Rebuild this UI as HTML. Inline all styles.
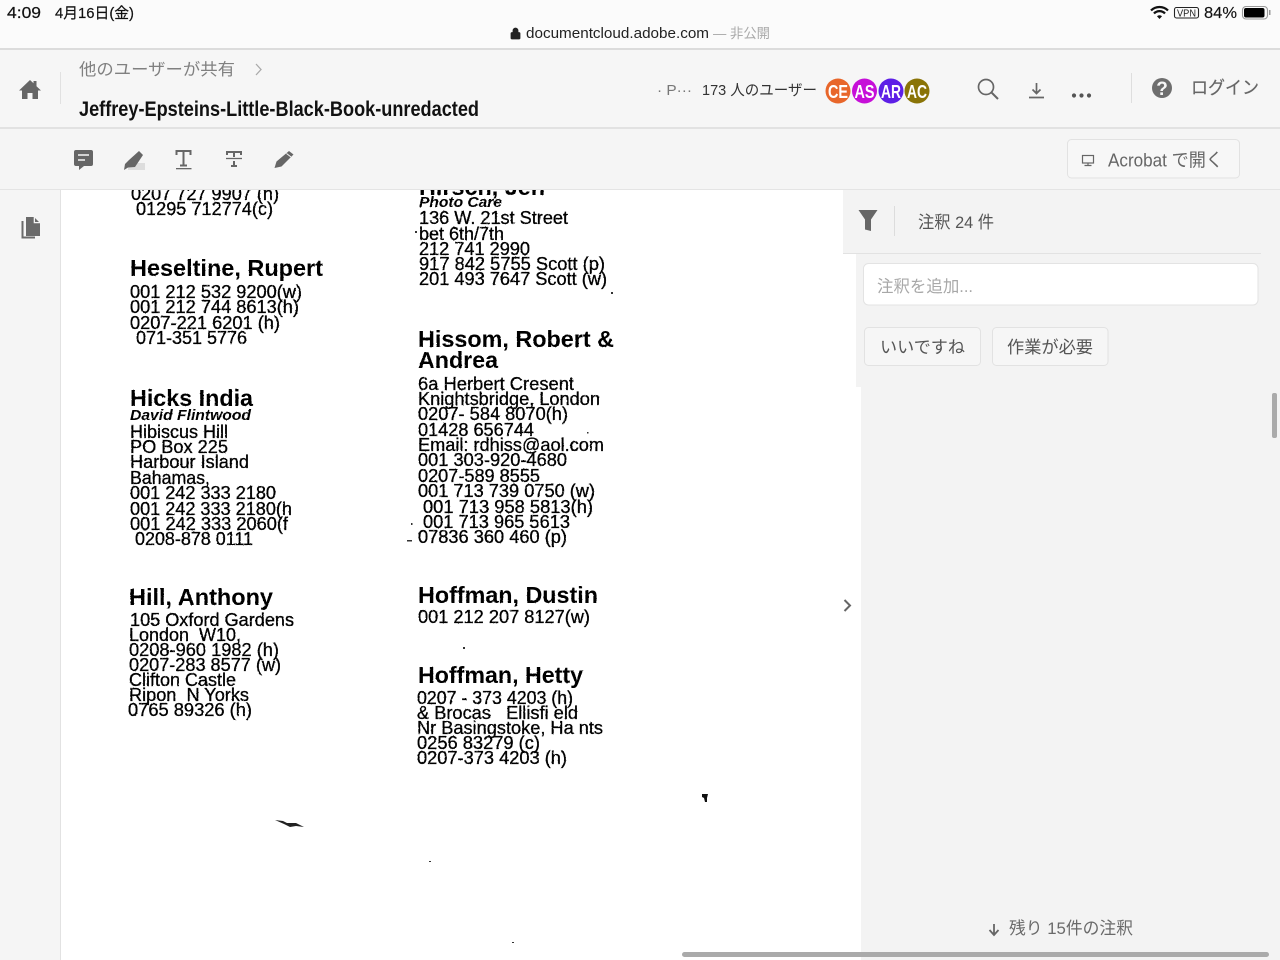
<!DOCTYPE html>
<html lang="ja">
<head>
<meta charset="utf-8">
<title>Jeffrey-Epsteins-Little-Black-Book-unredacted</title>
<style>
html,body{margin:0;padding:0;width:1280px;height:960px;overflow:hidden;background:#fff}
svg{display:block}
text{font-family:"Liberation Sans","Noto Sans CJK JP",sans-serif;white-space:pre}
.d{font-size:18px;fill:#000;stroke:#000;stroke-width:.3}
.h{font-size:23px;font-weight:bold;fill:#000}
.i{font-size:14.500px;font-weight:bold;font-style:italic;fill:#000}
</style>
</head>
<body>
<svg width="1280" height="960" viewBox="0 0 1280 960" xmlns="http://www.w3.org/2000/svg">
<defs>
<filter id="scan" filterUnits="userSpaceOnUse" x="61" y="190" width="782" height="770">
<feTurbulence type="fractalNoise" baseFrequency="0.6" numOctaves="1" seed="4" result="n"/>
<feDisplacementMap in="SourceGraphic" in2="n" scale="1.300" xChannelSelector="R" yChannelSelector="G"/>
</filter>
</defs>
<!-- backgrounds -->
<rect width="1280" height="960" fill="#fff"/>
<rect width="1280" height="49" fill="#fbfbfb"/>
<rect y="48" width="1280" height="2" fill="#dcdcdc"/>
<rect y="50" width="1280" height="78" fill="#f6f6f6"/>
<rect y="127" width="1280" height="2" fill="#e2e2e2"/>
<rect y="129" width="1280" height="60" fill="#f5f5f5"/>
<rect y="189" width="1280" height="1" fill="#e4e4e4"/>
<rect y="190" width="60" height="770" fill="#f5f5f5"/>
<rect x="60" y="190" width="1" height="770" fill="#e2e2e2"/>
<rect x="843" y="190" width="437" height="63" fill="#f3f3f3"/>
<rect x="856" y="253" width="424" height="134" fill="#f3f3f3"/>
<rect x="861" y="387" width="419" height="573" fill="#f3f3f3"/>
<rect x="843" y="253" width="418" height="1" fill="#e2e2e2"/>

<!-- status bar -->
<text x="7" y="18" font-size="15.500" fill="#111" stroke="#111" stroke-width=".2" textLength="34" lengthAdjust="spacingAndGlyphs">4:09</text>
<text x="55" y="18" font-size="15" fill="#111" stroke="#111" stroke-width=".2" textLength="79" lengthAdjust="spacingAndGlyphs">4月16日(金)</text>
<path d="M512 32.500h7a1 1 0 0 1 1 1v4.500a1 1 0 0 1-1 1h-7a1 1 0 0 1-1-1v-4.500a1 1 0 0 1 1-1zM513 32.500v-2a2.500 2.500 0 0 1 5 0v2" fill="#222" stroke="#222" stroke-width=".8"/>
<text x="526" y="38" font-size="15" fill="#222" textLength="183" lengthAdjust="spacingAndGlyphs">documentcloud.adobe.com</text>
<text x="713" y="38" font-size="13.500" fill="#aaa" textLength="57" lengthAdjust="spacingAndGlyphs">— 非公開</text>
<path d="M1151 10.500a12 12 0 0 1 17 0M1154 13.500a7.500 7.500 0 0 1 11 0" fill="none" stroke="#111" stroke-width="2.300"/>
<path d="M1157 16.300a3.500 3.500 0 0 1 5 0l-2.500 2.700z" fill="#111"/>
<rect x="1174.500" y="7.500" width="24" height="10.500" rx="2" fill="none" stroke="#222" stroke-width="1.100"/>
<text x="1177" y="16.500" font-size="10.500" fill="#222" textLength="19" lengthAdjust="spacingAndGlyphs">VPN</text>
<text x="1204" y="18" font-size="16" fill="#111" stroke="#111" stroke-width=".15" textLength="33" lengthAdjust="spacingAndGlyphs">84%</text>
<rect x="1242.500" y="6.500" width="25" height="12.500" rx="3.500" fill="none" stroke="#999" stroke-width="1.100"/>
<rect x="1244" y="8" width="20.500" height="9.500" rx="2" fill="#000"/>
<rect x="1269" y="10" width="1.500" height="5" fill="#999"/>

<!-- header -->
<path d="M19 90.500 30 80l3.500 3.300V81h3v5.200l4.500 4.300h-3V99h-5.500v-6h-5v6H22v-8.500z" fill="#666"/>
<rect x="60" y="72" width="1" height="32" fill="#e1e1e1"/>
<text x="79" y="75" font-size="16.500" fill="#808080" textLength="156" lengthAdjust="spacingAndGlyphs">他のユーザーが共有</text>
<path d="M256 64l5 5.500-5 5.500" fill="none" stroke="#aaa" stroke-width="1.300"/>
<text x="79" y="116" font-size="21" font-weight="bold" fill="#111" textLength="400" lengthAdjust="spacingAndGlyphs">Jeffrey-Epsteins-Little-Black-Book-unredacted</text>
<text x="657" y="95" font-size="15" fill="#777" textLength="35" lengthAdjust="spacingAndGlyphs">· P···</text>
<text x="702" y="95" font-size="15" fill="#333" textLength="115" lengthAdjust="spacingAndGlyphs">173 人のユーザー</text>
<circle cx="838" cy="91" r="12.500" fill="#e8662a"/>
<circle cx="864.500" cy="91" r="12.500" fill="#c60fd8"/>
<circle cx="891" cy="91" r="12.500" fill="#5d1fe6"/>
<circle cx="917" cy="91" r="12.500" fill="#8a7407"/>
<g font-size="18" font-weight="bold" fill="#fff">
<text x="828" y="98" textLength="20" lengthAdjust="spacingAndGlyphs">CE</text>
<text x="854.500" y="98" textLength="20" lengthAdjust="spacingAndGlyphs">AS</text>
<text x="881" y="98" textLength="20" lengthAdjust="spacingAndGlyphs">AR</text>
<text x="907" y="98" textLength="20" lengthAdjust="spacingAndGlyphs">AC</text>
</g>
<circle cx="986" cy="87" r="7.500" fill="none" stroke="#666" stroke-width="1.700"/>
<path d="M991.500 92.500 998 99" stroke="#666" stroke-width="2" fill="none"/>
<path d="M1036.500 83v10M1032.500 89.500l4 4 4-4M1029 97.500h15" fill="none" stroke="#666" stroke-width="1.700"/>
<g fill="#555"><circle cx="1074" cy="95.500" r="2.100"/><circle cx="1081.500" cy="95.500" r="2.100"/><circle cx="1089" cy="95.500" r="2.100"/></g>
<rect x="1131" y="73" width="1" height="30" fill="#dedede"/>
<circle cx="1162" cy="88" r="10" fill="#6e6e6e"/>
<text x="1162" y="95" font-size="19" font-weight="bold" fill="#f6f6f6" text-anchor="middle">?</text>
<text x="1191" y="94" font-size="18" fill="#666" stroke="#666" stroke-width=".2" textLength="68" lengthAdjust="spacingAndGlyphs">ログイン</text>

<!-- toolbar -->
<path d="M76 150h15a2 2 0 0 1 2 2v12a2 2 0 0 1-2 2H84l-5 4v-4h-3a2 2 0 0 1-2-2v-12a2 2 0 0 1 2-2z" fill="#666"/>
<path d="M78 155h11M78 160h7" stroke="#f5f5f5" stroke-width="1.500"/>
<rect x="128" y="163" width="17" height="7" fill="#ddd"/>
<path d="M139 151l4 4-8 12-7 .5-4 2.500 1-6 4-4z" fill="#666"/>
<path d="M176.500 155v-4h14v4M183.500 151v15M180 165.500h7" fill="none" stroke="#666" stroke-width="2"/>
<rect x="176" y="168" width="15.500" height="1.300" fill="#666"/>
<path d="M227 155v-3h14v3M234 152v5M234 161v4" fill="none" stroke="#666" stroke-width="2"/>
<path d="M226 158.500h16" stroke="#666" stroke-width="1.300"/>
<rect x="231" y="165" width="6" height="2" fill="#666"/>
<path d="M289 151l4.500 3.500-12 12-7 1.500 2-6.500z" fill="#666"/>
<path d="M286.500 153.500l4.500 3.500" stroke="#f5f5f5" stroke-width="1"/>
<rect x="1067.500" y="139.500" width="172" height="38.500" rx="4" fill="#f7f7f7" stroke="#e2e2e2"/>
<rect x="1082.500" y="155.500" width="11" height="7.500" fill="none" stroke="#666" stroke-width="1.200"/>
<path d="M1088 163v2M1084.500 165.500h7" stroke="#666" stroke-width="1.200"/>
<text x="1108" y="166.500" font-size="18.500" fill="#666" textLength="115" lengthAdjust="spacingAndGlyphs">Acrobat で開く</text>

<!-- left rail icon -->
<path d="M26 217h8l6 6v13H26z" fill="#6a6a6a"/>
<path d="M34 217v6h6z" fill="#f5f5f5" stroke="#f5f5f5" stroke-width=".6"/>
<path d="M35 218l4 4h-4z" fill="#6a6a6a"/>
<path d="M22.500 221v16.500H35" fill="none" stroke="#6a6a6a" stroke-width="2"/>

<!-- document -->
<svg x="61" y="190" width="782" height="770" viewBox="61 190 782 770" overflow="hidden">
<g filter="url(#scan)">
<text class="d" x="131" y="200" textLength="148" lengthAdjust="spacingAndGlyphs">0207 727 9907 (h)</text>
<text class="d" x="136" y="215" textLength="137" lengthAdjust="spacingAndGlyphs">01295 712774(c)</text>
<text class="h" x="130" y="276" textLength="193" lengthAdjust="spacingAndGlyphs">Heseltine, Rupert</text>
<text class="d" x="130" y="298" textLength="172" lengthAdjust="spacingAndGlyphs">001 212 532 9200(w)</text>
<text class="d" x="130" y="313" textLength="169" lengthAdjust="spacingAndGlyphs">001 212 744 8613(h)</text>
<text class="d" x="130" y="329" textLength="150" lengthAdjust="spacingAndGlyphs">0207-221 6201 (h)</text>
<text class="d" x="136" y="344" textLength="111" lengthAdjust="spacingAndGlyphs">071-351 5776</text>
<text class="h" x="130" y="406" textLength="123" lengthAdjust="spacingAndGlyphs">Hicks India</text>
<text class="i" x="130" y="420" textLength="121" lengthAdjust="spacingAndGlyphs">David Flintwood</text>
<text class="d" x="130" y="438" textLength="98" lengthAdjust="spacingAndGlyphs">Hibiscus Hill</text>
<text class="d" x="130" y="453" textLength="98" lengthAdjust="spacingAndGlyphs">PO Box 225</text>
<text class="d" x="130" y="468" textLength="119" lengthAdjust="spacingAndGlyphs">Harbour Island</text>
<text class="d" x="130" y="484" textLength="80" lengthAdjust="spacingAndGlyphs">Bahamas,</text>
<text class="d" x="130" y="499" textLength="146" lengthAdjust="spacingAndGlyphs">001 242 333 2180</text>
<text class="d" x="130" y="515" textLength="162" lengthAdjust="spacingAndGlyphs">001 242 333 2180(h</text>
<text class="d" x="130" y="530" textLength="158" lengthAdjust="spacingAndGlyphs">001 242 333 2060(f</text>
<text class="d" x="135" y="545" textLength="118" lengthAdjust="spacingAndGlyphs">0208-878 0111</text>
<text class="h" x="129" y="605" textLength="144" lengthAdjust="spacingAndGlyphs">Hill, Anthony</text>
<text class="d" x="130" y="626" textLength="164" lengthAdjust="spacingAndGlyphs">105 Oxford Gardens</text>
<text class="d" x="129" y="641" textLength="112" lengthAdjust="spacingAndGlyphs">London  W10,</text>
<text class="d" x="129" y="656" textLength="150" lengthAdjust="spacingAndGlyphs">0208-960 1982 (h)</text>
<text class="d" x="129" y="671" textLength="152" lengthAdjust="spacingAndGlyphs">0207-283 8577 (w)</text>
<text class="d" x="129" y="686" textLength="107" lengthAdjust="spacingAndGlyphs">Clifton Castle</text>
<text class="d" x="129" y="701" textLength="120" lengthAdjust="spacingAndGlyphs">Ripon  N Yorks</text>
<text class="d" x="128" y="716" textLength="124" lengthAdjust="spacingAndGlyphs">0765 89326 (h)</text>

<text class="h" x="419" y="195" textLength="126" lengthAdjust="spacingAndGlyphs">Hirsch, Jen</text>
<text class="i" x="419" y="207" textLength="83" lengthAdjust="spacingAndGlyphs">Photo Care</text>
<text class="d" x="419" y="224" textLength="149" lengthAdjust="spacingAndGlyphs">136 W. 21st Street</text>
<text class="d" x="419" y="240" textLength="85" lengthAdjust="spacingAndGlyphs">bet 6th/7th</text>
<text class="d" x="419" y="255" textLength="111" lengthAdjust="spacingAndGlyphs">212 741 2990</text>
<text class="d" x="419" y="270" textLength="186" lengthAdjust="spacingAndGlyphs">917 842 5755 Scott (p)</text>
<text class="d" x="419" y="285" textLength="188" lengthAdjust="spacingAndGlyphs">201 493 7647 Scott (w)</text>
<text class="h" x="418" y="347" textLength="196" lengthAdjust="spacingAndGlyphs">Hissom, Robert &amp;</text>
<text class="h" x="418" y="368" textLength="80" lengthAdjust="spacingAndGlyphs">Andrea</text>
<text class="d" x="418" y="390" textLength="156" lengthAdjust="spacingAndGlyphs">6a Herbert Cresent</text>
<text class="d" x="418" y="405" textLength="182" lengthAdjust="spacingAndGlyphs">Knightsbridge, London</text>
<text class="d" x="418" y="420" textLength="150" lengthAdjust="spacingAndGlyphs">0207- 584 8070(h)</text>
<text class="d" x="418" y="436" textLength="116" lengthAdjust="spacingAndGlyphs">01428 656744</text>
<text class="d" x="418" y="451" textLength="186" lengthAdjust="spacingAndGlyphs">Email: rdhiss@aol.com</text>
<text class="d" x="418" y="466" textLength="149" lengthAdjust="spacingAndGlyphs">001 303-920-4680</text>
<text class="d" x="418" y="482" textLength="122" lengthAdjust="spacingAndGlyphs">0207-589 8555</text>
<text class="d" x="418" y="497" textLength="177" lengthAdjust="spacingAndGlyphs">001 713 739 0750 (w)</text>
<text class="d" x="423" y="513" textLength="170" lengthAdjust="spacingAndGlyphs">001 713 958 5813(h)</text>
<text class="d" x="423" y="528" textLength="147" lengthAdjust="spacingAndGlyphs">001 713 965 5613</text>
<text class="d" x="418" y="543" textLength="149" lengthAdjust="spacingAndGlyphs">07836 360 460 (p)</text>
<text class="h" x="418" y="603" textLength="180" lengthAdjust="spacingAndGlyphs">Hoffman, Dustin</text>
<text class="d" x="418" y="623" textLength="172" lengthAdjust="spacingAndGlyphs">001 212 207 8127(w)</text>
<text class="h" x="418" y="683" textLength="165" lengthAdjust="spacingAndGlyphs">Hoffman, Hetty</text>
<text class="d" x="417" y="704" textLength="156" lengthAdjust="spacingAndGlyphs">0207 - 373 4203 (h)</text>
<text class="d" x="417" y="719" textLength="161" lengthAdjust="spacingAndGlyphs">&amp; Brocas   Ellisfi eld</text>
<text class="d" x="417" y="734" textLength="186" lengthAdjust="spacingAndGlyphs">Nr Basingstoke, Ha nts</text>
<text class="d" x="417" y="749" textLength="123" lengthAdjust="spacingAndGlyphs">0256 83279 (c)</text>
<text class="d" x="417" y="764" textLength="150" lengthAdjust="spacingAndGlyphs">0207-373 4203 (h)</text>
</g>

<!-- scan specks -->
<path d="M275 820l8 1 4 2 9 0 8 4-8-1-6 1-6-3z" fill="#222"/>
<path d="M702 794h6l-1 4 0 4h-2l-1-4-2-1z" fill="#111"/>
<g fill="#333">
<rect x="611" y="292" width="2" height="2"/><rect x="415" y="231" width="2" height="2"/>
<rect x="411" y="523" width="1.500" height="2"/><rect x="407" y="540" width="5" height="1.500"/>
<rect x="463" y="647" width="2" height="2"/><rect x="429" y="861" width="2" height="1"/>
<rect x="512" y="942" width="2" height="1"/><rect x="587" y="432" width="1.500" height="1.500"/>
</g>
</svg>

<!-- panel -->
<path d="M858.500 210h19l-6.500 9.500v11.500l-6-1.500v-10z" fill="#666"/>
<rect x="894" y="206" width="1" height="30" fill="#dcdcdc"/>
<text x="918" y="228" font-size="17" fill="#555" textLength="76" lengthAdjust="spacingAndGlyphs">注釈 24 件</text>
<rect x="863.500" y="263.500" width="394.500" height="41.500" rx="5" fill="#fff" stroke="#e3e3e3"/>
<text x="877" y="292" font-size="16.500" fill="#a8a8a8" textLength="96" lengthAdjust="spacingAndGlyphs">注釈を追加...</text>
<rect x="864.500" y="327.500" width="116" height="38" rx="4" fill="#f6f6f6" stroke="#e2e2e2"/>
<text x="880" y="353" font-size="17" fill="#555" textLength="85" lengthAdjust="spacingAndGlyphs">いいですね</text>
<rect x="992.500" y="327.500" width="115.500" height="38" rx="4" fill="#f6f6f6" stroke="#e2e2e2"/>
<text x="1007" y="353" font-size="17" fill="#555" textLength="86" lengthAdjust="spacingAndGlyphs">作業が必要</text>
<path d="M844.500 600l5.500 5.500-5.500 5.500" fill="none" stroke="#666" stroke-width="2"/>
<path d="M994 924v10M989.500 930l4.500 5 4.500-5" fill="none" stroke="#666" stroke-width="1.800"/>
<text x="1009" y="934" font-size="17" fill="#6a6a6a" textLength="124" lengthAdjust="spacingAndGlyphs">残り 15件の注釈</text>

<!-- scrollbars -->
<rect x="1272" y="393" width="5" height="45" rx="2" fill="#aaa"/>
<rect x="682" y="952" width="587" height="5" rx="2.500" fill="#aaa"/>
</svg>
</body>
</html>
